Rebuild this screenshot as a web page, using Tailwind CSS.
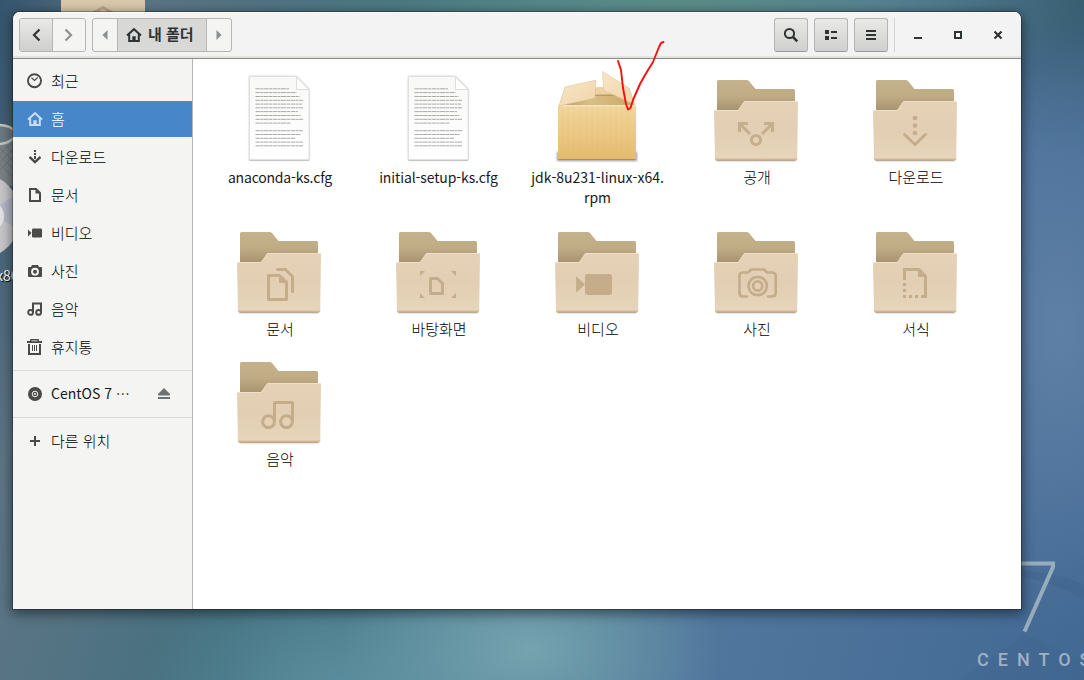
<!DOCTYPE html>
<html lang="ko">
<head>
<meta charset="utf-8">
<title>내 폴더</title>
<script src="https://cdn.jsdelivr.net/npm/@tailwindcss/browser@4"></script>
</head>
<body class="w-[1084px] h-[680px] overflow-hidden">
<svg width="0" height="0" class="absolute">
  <defs>
    <linearGradient id="gBack" x1="0" y1="0" x2="0" y2="1"><stop offset="0" stop-color="#c4b28c"/><stop offset=".5" stop-color="#bfac85"/><stop offset="1" stop-color="#a5926e"/></linearGradient>
    <linearGradient id="gFront" x1="0" y1="0" x2="0" y2="1"><stop offset="0" stop-color="#e5d2b7"/><stop offset=".5" stop-color="#e2ceb3"/><stop offset="1" stop-color="#e6d6bb"/></linearGradient>
    <linearGradient id="gPage" x1="0" y1="0" x2="0" y2="1"><stop offset="0" stop-color="#f8f8f7"/><stop offset="1" stop-color="#ffffff"/></linearGradient>
    <linearGradient id="gBox" x1="0" y1="0" x2="0" y2="1"><stop offset="0" stop-color="#f2d69d"/><stop offset="1" stop-color="#e4bb6d"/></linearGradient>
    <linearGradient id="gFlap" x1="0" y1="0" x2="1" y2="1"><stop offset="0" stop-color="#f8e6c6"/><stop offset="1" stop-color="#efd5aa"/></linearGradient>
    <linearGradient id="gInner" x1="0" y1="0" x2="1" y2="0"><stop offset="0" stop-color="#b8975e"/><stop offset=".4" stop-color="#dcbf85"/><stop offset="1" stop-color="#c9a768"/></linearGradient>
    <filter id="soft" x="-20%" y="-20%" width="140%" height="160%"><feGaussianBlur stdDeviation="1.3"/></filter>
    <symbol id="folder" viewBox="0 0 96 94">
      <rect x="8" y="79" width="80" height="8" rx="2" fill="#000" opacity=".3" filter="url(#soft)"/>
      <path d="M9 38V7.500Q9 6 10.500 6H38.500Q40 6 41 7L47.500 15H85.500Q87 15 87 16.500V38Z" fill="url(#gBack)"/>
      <path d="M7 85L6 37.500Q6 36 7.500 36H29.500Q30.500 36 31.500 34.500L35.500 28.500Q36.500 27 38 27H88.500Q90 27 90 28.500L89.200 84.500Q89.200 86.300 87.500 86.300H8.500Q7 86.300 7 85Z" fill="url(#gFront)"/>
      <path d="M6.500 37.500V36.500H30L36.500 27.500H89.500" fill="none" stroke="#efe1cc" stroke-width=".9"/>
      <path d="M7 84.500H89.300V84.700Q89 86.500 87.500 86.500H8.500Q7 86.500 7 84.700Z" fill="#d6bd97"/>
      <path d="M8.500 86.300H87.500" stroke="#a8947a" stroke-width=".7"/>
    </symbol>
    <symbol id="textfile" viewBox="0 0 96 94">
      <path d="M18.500 2.500H65L78 15.500V86H18.500Z" fill="#000" opacity=".35" filter="url(#soft)"/>
      <path d="M18.500 2.500H65L78 15.500V86H18.500Z" fill="url(#gPage)" stroke="#dcdcdc" stroke-width=".7"/>
      <path d="M18.500 86.200H78" stroke="#b0b0b0" stroke-width=".8"/>
      <path d="M65.500 3V15.500H78Z" fill="#fff" stroke="#d4d4d4" stroke-width=".8"/>
      <g stroke="#a9a9a9" stroke-width="1" stroke-dasharray="4.300 .5 2.700 .4 5.200 .5 3.400 .6">
        <path d="M24.500 14.800H58M24.500 18.600H65.500M24.500 22.500H68.500M24.500 26.300H72M24.500 30.100H71M24.500 33.800H72M24.500 37.600H67M24.500 41.500H69.500M24.500 45.300H72M24.500 49.100H60M24.500 56.700H72M24.500 60.500H69.500M24.500 64.300H64.500M24.500 68.100H72M24.500 71.800H72"/>
      </g>
    </symbol>
    <symbol id="home" viewBox="0 0 16 16">
      <path d="M1 8.500L8 2.200L15 8.500M3.200 7.500V14H12.800V7.500" fill="none" stroke="currentColor" stroke-width="2"/>
      <path d="M6.300 9.300H9.700V14H6.300Z" fill="currentColor"/>
    </symbol>
  </defs>
</svg>

<div class="relative w-[1084px] h-[680px] overflow-hidden bg-[#4c7390] bg-[radial-gradient(ellipse_190px_130px_at_530px_650px,#76a3af_0%,#76a3af00_100%),radial-gradient(ellipse_200px_140px_at_340px_700px,#5c8f9f_0%,#5c8f9f00_100%),radial-gradient(ellipse_420px_120px_at_680px_0px,#5b8c87_0%,#5b8c8700_100%),radial-gradient(ellipse_140px_300px_at_1060px_330px,#5f80a6_0%,#5f80a600_100%),radial-gradient(ellipse_200px_160px_at_1084px_0px,#375c70_0%,#375c7000_100%),linear-gradient(105deg,#34556e_0%,#5d7585_10%,#43707f_32%,#4c7f91_48%,#51779d_68%,#426994_100%)] font-['Noto_Sans_CJK_KR',sans-serif]">

  <!-- desktop items behind the window -->
  <svg class="absolute left-0 top-0" width="1084" height="680" viewBox="0 0 1084 680">
    <path d="M61 0H145V14H61Z" fill="#dac8ac"/>
    <path d="M90 15L103 7.500L116 15" fill="none" stroke="#bba688" stroke-width="3"/>
    <path d="M0 138H14V186H0Z" fill="#7a8184"/>
    <path d="M0 140L14 154M0 148L14 162M0 156L14 170M0 164L14 178M14 140L0 154M14 148L0 162M14 156L0 170" stroke="#6b7479" stroke-width="1"/>
    <path d="M0 125Q12 126 14 131V138Q9 143 0 144" fill="#687a82" stroke="#c5c5bf" stroke-width="2.500"/>
    <circle cx="-22" cy="216" r="43" fill="#c6c6c9"/>
    <path d="M-2 206L14 196V226L-2 218Z" fill="#b4b7c4"/>
    <circle cx="-12" cy="216" r="16" fill="#e3e3e6"/>
    <path d="M1000 570Q1055 570 1084 585V600Q1050 580 1015 576Z" fill="#3c6089" opacity=".35"/>
    <path d="M1025 634L1084 662V680H960Z" fill="#3f648a" opacity=".3"/>
    <path d="M1018 563.500H1053V567L1024.500 631.500" fill="none" stroke="#97adbd" stroke-width="4"/>
  </svg>
  <div class="absolute left-[-4px] top-[265px] text-[14px] leading-5 text-white [text-shadow:1px_1px_1px_#000]">x86</div>
  <div class="absolute left-[977px] top-[648px] whitespace-nowrap font-['Roboto'] text-[18px] leading-6 font-medium tracking-[9px] text-[#9db2c2]">CENTOS</div>

  <!-- file manager window -->
  <div class="absolute left-[13px] top-[12px] w-[1008px] h-[597px] flex flex-col rounded-t-[7px] overflow-hidden bg-white shadow-[0_0_0_1px_rgba(0,0,0,.28),0_3px_12px_2px_rgba(0,0,0,.45)]">
    <header class="h-[47px] shrink-0 flex items-start pt-[6px] pl-[6px] bg-[#f3f3f3] border-b border-[#8b8b86] shadow-[inset_0_1px_0_#fff,inset_0_-2px_1px_#e2e2e0] text-[#2e3436]">
      <div class="flex w-[67px] h-[34px] rounded-[3px] border border-[#b5b5b2] overflow-hidden">
        <div class="w-[33px] flex items-center justify-center border-r border-[#b5b5b2] bg-linear-to-b from-[#e9e9e8] to-[#cfcfcd]">
          <svg width="16" height="16" viewBox="0 0 16 16"><path d="M11.500 2.500L6 8L11.500 13.500" fill="none" stroke="currentColor" stroke-width="2.200"/></svg>
        </div>
        <div class="flex-1 flex items-center justify-center bg-[#f4f4f3] text-[#8e9192]">
          <svg width="16" height="16" viewBox="0 0 16 16"><path d="M4.500 2.500L10 8L4.500 13.500" fill="none" stroke="currentColor" stroke-width="2.200"/></svg>
        </div>
      </div>
      <div class="ml-[6px] flex w-[140px] h-[34px] rounded-[3px] border border-[#b5b5b2] overflow-hidden bg-[#f4f4f3]">
        <div class="w-[24px] flex items-center justify-center text-[#8b8f8f]"><svg width="6" height="10" viewBox="0 0 6 10"><path d="M5.500 0V10L.5 5Z" fill="currentColor"/></svg></div>
        <div class="w-[90px] pl-[8px] flex items-center gap-[6px] border-x border-[#b5b5b2] bg-[#d8d8d6]">
          <svg class="shrink-0" width="16" height="16"><use href="#home"/></svg>
          <span class="-mt-[2px] text-[15px] leading-5 font-bold whitespace-nowrap">내 폴더</span>
        </div>
        <div class="flex-1 flex items-center justify-center text-[#8b8f8f]"><svg width="6" height="10" viewBox="0 0 6 10"><path d="M.5 0V10L5.500 5Z" fill="currentColor"/></svg></div>
      </div>
      <div class="ml-auto flex gap-[6px]">
        <div class="size-[34px] flex items-center justify-center rounded-[3px] border border-[#b5b5b2] border-b-[#999] bg-linear-to-b from-[#e9e9e8] to-[#cfcfcd]">
          <svg width="16" height="16" viewBox="0 0 16 16"><circle cx="6.500" cy="6.500" r="4.600" fill="none" stroke="currentColor" stroke-width="2"/><path d="M10 10L14.300 14.300" stroke="currentColor" stroke-width="2.500"/></svg>
        </div>
        <div class="size-[34px] flex items-center justify-center rounded-[3px] border border-[#b5b5b2] border-b-[#999] bg-linear-to-b from-[#e9e9e8] to-[#cfcfcd]">
          <svg width="16" height="16" viewBox="0 0 16 16"><path d="M2 3h4v4H2zM2 9h4v4H2zM8 4h6v2H8zM8 10h6v2H8z" fill="currentColor"/></svg>
        </div>
        <div class="size-[34px] flex items-center justify-center rounded-[3px] border border-[#b5b5b2] border-b-[#999] bg-linear-to-b from-[#e9e9e8] to-[#cfcfcd]">
          <svg width="16" height="16" viewBox="0 0 16 16"><path d="M3 3h10v2H3zM3 7h10v2H3zM3 11h10v2H3z" fill="currentColor"/></svg>
        </div>
        <div class="w-px h-[34px] bg-[#d5d5d3]"></div>
      </div>
      <div class="ml-[15px] mr-[15px] h-[34px] flex items-center gap-[24px]">
        <svg width="16" height="16" viewBox="0 0 16 16"><path d="M4 10h8v2H4z" fill="currentColor"/></svg>
        <svg width="16" height="16" viewBox="0 0 16 16"><path d="M5 5h6v6H5z" fill="#fff" stroke="currentColor" stroke-width="2"/></svg>
        <svg width="16" height="16" viewBox="0 0 16 16"><path d="M4.500 4.500L11.500 11.500M11.500 4.500L4.500 11.500" stroke="currentColor" stroke-width="2.200"/></svg>
      </div>
    </header>

    <div class="flex-1 flex min-h-0">
      <nav class="w-[180px] shrink-0 border-r border-[#b3b3b0] bg-[#f4f4f2] pt-[4px] flex flex-col text-[15px] leading-5 text-black font-light">
        <div class="flex flex-col gap-[2px]">
          <div class="h-[36px] px-[14px] flex items-center gap-[8px]"><svg class="text-[#4a4a48]" width="16" height="16" viewBox="0 0 16 16"><circle cx="7.500" cy="7.700" r="6.500" fill="none" stroke="currentColor" stroke-width="1.900"/><path d="M4.500 4.700L7.500 7.500L10.700 4.500" fill="none" stroke="currentColor" stroke-width="1.200"/></svg>최근</div>
          <div class="h-[36px] px-[14px] flex items-center gap-[8px] bg-[#4787c9] text-white"><svg class="text-[#c9dcf1]" width="16" height="16"><use href="#home"/></svg>홈</div>
          <div class="h-[36px] px-[14px] flex items-center gap-[8px]"><svg class="text-[#4a4a48]" width="16" height="16" viewBox="0 0 16 16"><path d="M7 1h2v2H7zM7 4h2v2H7zM7 7h2v3H7z" fill="currentColor"/><path d="M2.500 7.800L8 13L13.500 7.800" fill="none" stroke="currentColor" stroke-width="2.400"/></svg>다운로드</div>
          <div class="h-[36px] px-[14px] flex items-center gap-[8px]"><svg class="text-[#4a4a48]" width="16" height="16" viewBox="0 0 16 16"><path d="M3 2H9L13 6V14H3Z" fill="none" stroke="currentColor" stroke-width="2"/><path d="M8.500 2V6.500H13Z" fill="currentColor"/></svg>문서</div>
          <div class="h-[36px] px-[14px] flex items-center gap-[8px]"><svg class="text-[#4a4a48]" width="16" height="16" viewBox="0 0 16 16"><rect x="5" y="3.500" width="10" height="9" rx="1.200" fill="currentColor"/><path d="M1 4.500L4.500 8L1 11.500Z" fill="currentColor"/></svg>비디오</div>
          <div class="h-[36px] px-[14px] flex items-center gap-[8px]"><svg class="text-[#4a4a48]" width="16" height="16" viewBox="0 0 16 16"><path fill-rule="evenodd" d="M5 2H11L12 4H14Q15 4 15 5V13Q15 14 14 14H2Q1 14 1 13V5Q1 4 2 4H4ZM8 4.800A3.900 3.900 0 1 0 8 12.600A3.900 3.900 0 1 0 8 4.800Z" fill="currentColor"/><circle cx="8" cy="8.700" r="2" fill="currentColor"/></svg>사진</div>
          <div class="h-[36px] px-[14px] flex items-center gap-[8px]"><svg class="text-[#4a4a48]" width="16" height="16" viewBox="0 0 16 16"><path d="M6 11V2.500H14V11" fill="none" stroke="currentColor" stroke-width="2"/><circle cx="3.600" cy="11.400" r="2.400" fill="none" stroke="currentColor" stroke-width="1.900"/><circle cx="11.600" cy="11.400" r="2.400" fill="none" stroke="currentColor" stroke-width="1.900"/></svg>음악</div>
          <div class="h-[36px] px-[14px] flex items-center gap-[8px]"><svg class="text-[#4a4a48]" width="16" height="16" viewBox="0 0 16 16"><path d="M0 2h3V1Q3 0 4 0h7q1 0 1 1v1h3v2H0ZM4.500 1.500v.7h6v-.7Z" fill="currentColor" fill-rule="evenodd"/><path d="M2 5V15H13V5" fill="none" stroke="currentColor" stroke-width="2"/><path d="M5.500 6V12M7.500 6V12M9.500 6V12" stroke="currentColor"/></svg>휴지통</div>
        </div>
        <div class="mt-[5px] h-px bg-[#dadad8]"></div>
        <div class="mt-[5px] h-[36px] pl-[14px] pr-[20px] flex items-center gap-[8px] font-normal"><svg class="text-[#4a4a48]" width="16" height="16" viewBox="0 0 16 16"><circle cx="8" cy="8" r="7" fill="currentColor"/><circle cx="8" cy="8" r="2.800" fill="none" stroke="#f4f4f2" stroke-width="1"/><circle cx="8" cy="8" r="1" fill="#f4f4f2"/></svg><span class="-mt-[2px] whitespace-nowrap text-[14px] text-[#1a1a1a]">CentOS 7 ⋯</span><svg class="ml-auto text-[#6c7273]" width="16" height="16" viewBox="0 0 16 16"><path d="M8 2L14 8H2ZM2 8h12v1.500H2zM2 11h12v2H2z" fill="currentColor"/></svg></div>
        <div class="mt-[5px] h-px bg-[#dadad8]"></div>
        <div class="mt-[5px] h-[36px] px-[14px] flex items-center gap-[8px]"><svg class="text-[#4a4a48]" width="16" height="16" viewBox="0 0 16 16"><path d="M7 3h2v4h4v2H9v4H7V9H3V7h4z" fill="currentColor"/></svg>다른 위치</div>
      </nav>

      <main class="flex-1 pt-[15px] pl-[6.5px] grid grid-cols-[repeat(5,159px)] grid-rows-[152px_130px_130px] text-[15px] leading-5 text-black text-center font-light">
        <div class="flex flex-col items-center"><svg width="96" height="94"><use href="#textfile"/></svg><span class="-mt-px pl-[2px] text-[14px] leading-5 font-normal tracking-[-.2px] text-[#1a1a1a]">anaconda-ks.cfg</span></div>
        <div class="flex flex-col items-center"><svg width="96" height="94"><use href="#textfile"/></svg><span class="-mt-px pl-[1px] text-[14px] leading-5 font-normal tracking-[-.12px] text-[#1a1a1a]">initial-setup-ks.cfg</span></div>
        <div class="flex flex-col items-center">
          <svg class="overflow-visible" width="96" height="94" viewBox="0 0 96 94">
            <path d="M8 78H88V87H8Z" fill="#000" opacity=".4" filter="url(#soft)"/>
            <path d="M16 14H80L86 32H10Z" fill="url(#gInner)"/>
            <path d="M47 13H79L82 20H46Z" fill="#ecd2a2"/>
            <path d="M46 21.500H80" stroke="#b89a66"/>
            <path d="M9 31.500H87V84.500Q87 86 85.500 86H10.500Q9 86 9 84.500Z" fill="url(#gBox)"/>
            <path d="M9 31.700H87" stroke="#fbeccb"/>
            <path d="M13 33V84M19 33V84M25 33V84M31 33V84M37 33V84M43 33V84M49 33V84M55 33V84M61 33V84M67 33V84M73 33V84M79 33V84" stroke="#d9ae61" stroke-width="1" opacity=".12"/>
            <path d="M9.500 85.500H86.500" stroke="#b58d4a"/>
            <path d="M16 13L47 6L46 24L10 32Z" fill="url(#gFlap)" stroke="#dcc08e" stroke-width=".5"/>
            <path d="M53.500 -2.500L80 14L86 31L54.500 16Z" fill="url(#gFlap)" stroke="#dcc08e" stroke-width=".5"/>
          </svg>
          <span class="-mt-px pl-[1px] text-[14px] leading-5 font-normal text-[#1a1a1a]">jdk-8u231-linux-x64.<br>rpm</span></div>
        <div class="flex flex-col items-center"><svg width="96" height="94" viewBox="0 0 96 94"><use href="#folder" width="96" height="94"/><g fill="none" stroke="#c5ae8c" stroke-width="3"><path d="M40 49.500H31.500V58M32 50L42 60M56 49.500H64.500V58M64 50L54 60"/><circle cx="48" cy="66" r="4.600"/></g></svg><span class="pl-[2px] -mt-px">공개</span></div>
        <div class="flex flex-col items-center"><svg width="96" height="94" viewBox="0 0 96 94"><use href="#folder" width="96" height="94"/><g fill="#c5ad8c"><circle cx="48" cy="44" r="2.300"/><circle cx="48" cy="51.500" r="2.300"/><circle cx="48" cy="59" r="2.300"/></g><path d="M37.500 60.500L48 70.500L58.500 60.500" fill="none" stroke="#c5ad8c" stroke-width="3" stroke-linecap="round"/></svg><span class="pl-[2px] -mt-px">다운로드</span></div>

        <div class="flex flex-col items-center"><svg width="96" height="94" viewBox="0 0 96 94"><use href="#folder" width="96" height="94"/><g fill="none" stroke="#c5ad8c" stroke-width="3" stroke-linejoin="round"><path d="M37.500 49.500H48.500L55.500 56V73.500H37.500Z"/><path d="M46.500 43.500H54.500L61.500 50.500V65.500" stroke-linecap="round"/></g><path d="M48 49V57H56Z" fill="#c5ad8c"/></svg><span class="pl-[2px] -mt-px">문서</span></div>
        <div class="flex flex-col items-center"><svg width="96" height="94" viewBox="0 0 96 94"><use href="#folder" width="96" height="94"/><path d="M40.500 52.500H47.500L52.500 57.500V67.500H40.500Z" fill="none" stroke="#c5ad8c" stroke-width="3" stroke-linejoin="round"/><path d="M30 45H35L30 50ZM66 45H61L66 50ZM30 72H35L30 67ZM66 72H61L66 67Z" fill="#c5ad8c"/></svg><span class="pl-[2px] -mt-px">바탕화면</span></div>
        <div class="flex flex-col items-center"><svg width="96" height="94" viewBox="0 0 96 94"><use href="#folder" width="96" height="94"/><rect x="36" y="48" width="27" height="21" rx="2.500" fill="#c5ad8c"/><path d="M27.500 51L35.500 58.500L27.500 66Z" fill="#c5ad8c" stroke="#c5ad8c" stroke-width=".8"/></svg><span class="pl-[2px] -mt-px">비디오</span></div>
        <div class="flex flex-col items-center"><svg width="96" height="94" viewBox="0 0 96 94"><use href="#folder" width="96" height="94"/><g fill="none" stroke="#c5ad8c" stroke-width="2.700"><path d="M39 70.500H35Q31.500 70.500 31.500 67V50Q31.500 46.500 35 46.500H40L43 43.500H56L59 46.500H64Q67.700 46.500 67.700 50V67Q67.700 70.500 64 70.500H60" stroke-linecap="round" stroke-linejoin="round"/><circle cx="49.700" cy="60" r="9.200"/><circle cx="49.700" cy="60" r="4.600"/></g></svg><span class="pl-[2px] -mt-px">사진</span></div>
        <div class="flex flex-col items-center"><svg width="96" height="94" viewBox="0 0 96 94"><use href="#folder" width="96" height="94"/><path d="M37.500 54V43.500H52L58.500 50V70.500H54" fill="none" stroke="#c5ad8c" stroke-width="3"/><path d="M51 43V51H59ZM36 57h3v3h-3zM36 63h3v3h-3zM36 69h3v3h-3zM42 69h3v3h-3zM48 69h3v3h-3z" fill="#c5ad8c"/></svg><span class="pl-[2px] -mt-px">서식</span></div>

        <div class="flex flex-col items-center"><svg width="96" height="94" viewBox="0 0 96 94"><use href="#folder" width="96" height="94"/><g fill="none" stroke="#c5ad8c" stroke-width="3"><circle cx="37.500" cy="65.700" r="5.900"/><circle cx="55.500" cy="65.700" r="5.900"/><path d="M43.500 65V46.500H61.500V65" stroke-linejoin="round"/></g></svg><span class="pl-[2px] -mt-px">음악</span></div>
      </main>
    </div>
  </div>

  <!-- freehand check mark over the window -->
  <svg class="absolute left-[610px] top-[36px]" width="60" height="80" viewBox="610 36 60 80"><path d="M618 61L621 70L623 88L626 104L628 109.500L630.500 108L633 100L640 84L645 75L653 62L659 47L661 43L663.500 42" fill="none" stroke="#fb0d0d" stroke-width="1.900" stroke-linecap="round" stroke-linejoin="round"/></svg>
</div>
</body>
</html>
